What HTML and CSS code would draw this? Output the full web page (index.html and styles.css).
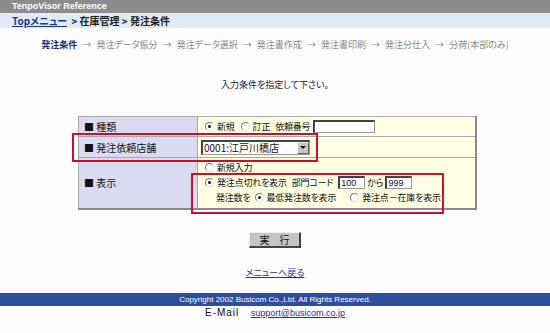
FILE: index.html
```html
<!DOCTYPE html>
<html lang="ja">
  <head>
    <meta charset="UTF-8" />
    <title>TenpoVisor Reference</title>
    <link rel="stylesheet" href="styles.css">
  </head>
  <body>
    <div class="titlebar">TenpoVisor Reference</div>
    <div class="crumbs">
      <a href="#" class="crumb-link">Topメニュー</a>
      <span class="crumb-rest">&gt; 在庫管理 &gt; 発注条件</span>
    </div>

    <div class="steps">
      <span class="step current">発注条件</span>
      <span class="arrow">→</span>
      <span class="step">発注データ振分</span>
      <span class="arrow">→</span>
      <span class="step">発注データ選択</span>
      <span class="arrow">→</span>
      <span class="step">発注書作成</span>
      <span class="arrow">→</span>
      <span class="step">発注書印刷</span>
      <span class="arrow">→</span>
      <span class="step">発注分仕入</span>
      <span class="arrow">→</span>
      <span class="step">分荷(本部のみ)</span>
    </div>

    <p class="intro">入力条件を指定して下さい。</p>

    <form class="cond-form">
      <div class="table-wrap">
        <table class="cond">
          <tr class="row-kind">
            <th>■ 種類</th>
            <td>
              <div class="line">
                <label class="opt"><input type="radio" name="kind" checked /> 新規</label>
                <label class="opt"><input type="radio" name="kind" /> 訂正</label>
                <span class="gap">依頼番号</span>
                <input type="text" class="txt req-no" />
              </div>
            </td>
          </tr>
          <tr class="row-shop">
            <th>■ 発注依頼店舗</th>
            <td>
              <div class="combo">
                <select>
                  <option>0001:江戸川橋店</option>
                </select>
                <span class="drop"></span>
              </div>
            </td>
          </tr>
          <tr class="row-view">
            <th>■ 表示</th>
            <td>
              <div class="line">
                <label class="opt"><input type="radio" name="view" /> 新規入力</label>
              </div>
              <div class="line">
                <label class="opt"><input type="radio" name="view" checked /> 発注点切れを表示</label>
                <span class="gap">部門コード</span>
                <input type="text" class="txt code" value="100" />
                <span>から</span>
                <input type="text" class="txt code" value="999" />
              </div>
              <div class="line indent">
                <span>発注数を</span>
                <label class="opt"><input type="radio" name="qty" checked /> 最低発注数を表示</label>
                <label class="opt far"><input type="radio" name="qty" /> 発注点－在庫を表示</label>
              </div>
            </td>
          </tr>
        </table>
        <div class="mark mark-shop"></div>
        <div class="mark mark-view"></div>
      </div>

      <div class="actions">
        <button type="button" class="run">実　行</button>
      </div>
    </form>

    <div class="back"><a href="#">メニューへ戻る</a></div>

    <div class="footer">Copyright 2002 Busicom Co.,Ltd. All Rights Reserved.</div>
    <div class="mail">
      <span class="mail-label">E-Mail</span>
      <a href="#">support@busicom.co.jp</a>
    </div>
  </body>
</html>
```

FILE: styles.css
```css
* {
  box-sizing: border-box;
}

html,
body {
  margin: 0;
  padding: 0;
  background: #fdfdfd;
}

body {
  font-family: "Noto Sans CJK JP", "Liberation Sans", sans-serif;
  font-feature-settings: "palt";
  font-size: 10px;
  color: #222;
}

a {
  color: #22339a;
}

.titlebar {
  height: 13px;
  line-height: 13px;
  background: #8c8c8c;
  color: #fff;
  font-family: "Liberation Sans", sans-serif;
  font-weight: bold;
  font-size: 9px;
  padding-left: 12px;
}

.crumbs {
  height: 15px;
  line-height: 15px;
  background: #dfeaf6;
  padding-left: 12px;
  font-weight: bold;
  font-size: 10px;
}

.crumb-link {
  color: #1a3a8a;
}

.crumb-rest {
  color: #222;
  margin-left: 2px;
}

.steps {
  margin-top: 10px;
  height: 14px;
  line-height: 14px;
  text-align: center;
  font-size: 9px;
  color: #8a8a8a;
}

.steps .current {
  color: #1b2f7a;
  font-weight: bold;
}

.steps .arrow {
  margin: 0 3px;
}

.intro {
  margin: 26px 0 0;
  height: 14px;
  line-height: 14px;
  text-align: center;
  font-size: 9px;
  color: #222;
}

.cond-form {
  margin: 24px 0 0;
}

.table-wrap {
  position: relative;
  width: 399px;
  margin-left: 78px;
}

.cond {
  width: 399px;
  border-collapse: collapse;
  border-top: 1px solid #d0d0d0;
  border-left: 1px solid #d0d0d0;
  border-right: 2px solid #8a8a8a;
  border-bottom: 2px solid #8a8a8a;
  font-size: 10px;
}

.cond th,
.cond td {
  border: 1px solid #a9a9a9;
  padding: 0;
  vertical-align: middle;
}

.cond th {
  width: 119px;
  background: #d9dbf1;
  text-align: left;
  font-weight: normal;
  padding-left: 5px;
  color: #111;
}

.cond td {
  background: #fffde2;
  padding-left: 4px;
  font-size: 9px;
  letter-spacing: -0.2px;
  color: #111;
}

.row-kind td,
.row-kind th {
  height: 20px;
}

.row-shop td,
.row-shop th {
  height: 21px;
}

.row-view td,
.row-view th {
  height: 51px;
}

.row-view td {
  padding-top: 2px;
  padding-bottom: 2px;
}

.line {
  height: 15px;
  display: flex;
  align-items: center;
  white-space: nowrap;
}

.indent {
  padding-left: 14px;
}

.opt {
  display: inline-flex;
  align-items: center;
  margin-right: 3px;
}

.opt.far {
  margin-left: 7px;
}

input[type="radio"] {
  appearance: none;
  width: 9px;
  height: 9px;
  margin: 0 3px 0 3px;
  border-radius: 50%;
  border: 1px solid #777;
  border-right-color: #ddd;
  border-bottom-color: #ddd;
  background: #fff;
  position: relative;
}

input[type="radio"]:checked::after {
  content: "";
  position: absolute;
  left: 2px;
  top: 2px;
  width: 3px;
  height: 3px;
  border-radius: 50%;
  background: #111;
}

.indent input[type="radio"] {
  margin-left: 4px;
}

.gap {
  margin-left: 2px;
  margin-right: 3px;
}

.txt {
  height: 13px;
  border: 1px solid #999;
  border-top: 2px solid #444;
  border-left: 2px solid #444;
  background: #fff;
  font-family: "Liberation Sans", sans-serif;
  font-size: 9px;
  letter-spacing: 0;
  padding: 0 1px;
  color: #111;
}

.req-no {
  width: 62px;
}

.code {
  width: 27px;
  margin: 0 2px;
}

.combo {
  display: flex;
  width: 109px;
  height: 15px;
  border: 1px solid #999;
  border-top: 2px solid #444;
  border-left: 2px solid #444;
  background: #fff;
  margin-left: -1px;
}

.combo select {
  appearance: none;
  flex: 1;
  border: none;
  background: #fff;
  font-family: "Noto Sans CJK JP", sans-serif;
  font-feature-settings: "palt";
  font-size: 10px;
  padding: 0 1px;
  height: 12px;
  line-height: 12px;
  color: #111;
}

.drop {
  width: 12px;
  background: #c8c8c8;
  border: 1px solid #eee;
  border-right-color: #666;
  border-bottom-color: #666;
  display: flex;
  align-items: center;
  justify-content: center;
}

.drop::after {
  content: "";
  border-left: 3px solid transparent;
  border-right: 3px solid transparent;
  border-top: 3px solid #111;
}

.mark {
  position: absolute;
  border: 2px solid #c8102e;
}

.mark-shop {
  left: -6px;
  top: 17px;
  width: 246px;
  height: 29px;
}

.mark-view {
  left: 113px;
  top: 57px;
  width: 253px;
  height: 41px;
}

.actions {
  margin-top: 22px;
  text-align: center;
}

.run {
  width: 52px;
  height: 16px;
  padding: 0;
  background: #c4c4c4;
  border: 1px solid #eee;
  border-right: 2px solid #444;
  border-bottom: 2px solid #444;
  font-family: "Noto Sans CJK JP", sans-serif;
  font-size: 10px;
  line-height: 12px;
  color: #111;
}

.back {
  margin-top: 19px;
  height: 12px;
  line-height: 12px;
  text-align: center;
  font-size: 9px;
}

.footer {
  margin-top: 14px;
  height: 13px;
  line-height: 13px;
  background: #2e4e9e;
  color: #fff;
  text-align: center;
  font-family: "Liberation Sans", sans-serif;
  font-size: 8px;
}

.mail {
  margin-top: 1px;
  height: 12px;
  line-height: 12px;
  text-align: center;
  font-family: "Liberation Sans", sans-serif;
  font-size: 9px;
  color: #111;
}

.mail-label {
  font-size: 10px;
  letter-spacing: 1px;
  margin-right: 9px;
}
```
